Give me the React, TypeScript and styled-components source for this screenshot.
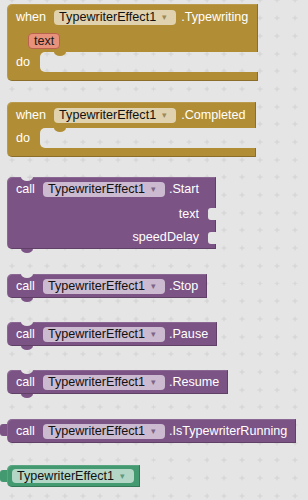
import styled, { createGlobalStyle, css } from "styled-components";

const EVENT = "#b18e35";
const METHOD = "#7c5385";
const COMPONENT = "#439970";

const plus =
  '<svg xmlns="http://www.w3.org/2000/svg" width="17.7" height="17.7"><path d="M6.35 8.85h5M8.85 6.35v5" stroke="#d2d2d2" stroke-width="1"/></svg>';

const gridBg = css`
  background-color: #e5e5e5;
  background-image: url("data:image/svg+xml,${encodeURIComponent(plus)}");
  background-size: 17.7px 17.7px;
  background-position: 3.15px -8.35px;
  background-attachment: fixed;
`;

const GlobalStyle = createGlobalStyle`
  html, body {
    margin: 0;
    padding: 0;
  }
  body {
    ${gridBg}
    font-family: "Liberation Sans", Arial, sans-serif;
  }
`;

const Workspace = styled.div`
  display: flex;
  flex-direction: column;
  align-items: flex-start;
  min-height: 500px;
  padding: 4px 0 0 7px;
  box-sizing: border-box;
`;

interface BlockProps {
  $color: string;
  $mt?: number;
  $prev?: boolean;
  $next?: boolean;
  $output?: boolean;
}

const Block = styled.div<BlockProps>`
  position: relative;
  display: flex;
  flex-direction: column;
  margin-top: ${(p) => p.$mt ?? 0}px;
  background: ${(p) => p.$color};
  border-radius: 5px 0 0 5px;
  box-shadow: inset -1px -1px 0 rgba(0, 0, 0, 0.22),
    inset 1px 1px 0 rgba(255, 255, 255, 0.12);
  color: #fff;
  font-size: 12.6px;

  ${(p) =>
    p.$prev &&
    css`
      &::before {
        content: "";
        position: absolute;
        top: 0;
        left: 14px;
        width: 12px;
        height: 4px;
        border-radius: 0 0 6px 6px / 0 0 4px 4px;
        ${gridBg}
      }
    `}

  ${(p) =>
    p.$next &&
    css`
      &::after {
        content: "";
        position: absolute;
        bottom: -4px;
        left: 14px;
        width: 12px;
        height: 4px;
        border-radius: 0 0 6px 6px / 0 0 4px 4px;
        background: ${p.$color};
      }
    `}

  ${(p) =>
    p.$output &&
    css`
      &::before {
        content: "";
        position: absolute;
        top: 5px;
        left: -7px;
        width: 7px;
        height: 12px;
        border-radius: 3px 0 0 3px;
        background: ${p.$color};
      }
    `}
`;

const Row = styled.div<{ $h: number; $pl?: number; $pr?: number; $end?: boolean }>`
  display: flex;
  align-items: center;
  justify-content: ${(p) => (p.$end ? "flex-end" : "flex-start")};
  height: ${(p) => p.$h}px;
  padding: 0 ${(p) => p.$pr ?? 0}px 0 ${(p) => p.$pl ?? 0}px;
`;

const Label = styled.span<{ $ml?: number }>`
  margin-left: ${(p) => p.$ml ?? 0}px;
  white-space: nowrap;
  line-height: 1;
`;

const Field = styled.span<{ $bg: string; $arrow: string; $ml?: number; $h?: number }>`
  display: inline-flex;
  align-items: center;
  height: ${(p) => p.$h ?? 15}px;
  margin-left: ${(p) => p.$ml ?? 0}px;
  padding: 0 9px 0 5px;
  border-radius: 4px;
  background: ${(p) => p.$bg};
  color: #111;
  white-space: nowrap;
  line-height: 1;

  &::after {
    content: "▾";
    margin-left: 6px;
    font-size: 9px;
    color: ${(p) => p.$arrow};
  }
`;

const ParamPill = styled.span`
  display: inline-flex;
  align-items: center;
  height: 16px;
  padding: 0 5px;
  box-sizing: border-box;
  border: 1px solid #b9624e;
  border-radius: 4px;
  background: #e8917b;
  color: #1a1a1a;
  line-height: 1;
`;

const DoRow = styled.div`
  display: flex;
  height: 20px;
`;

const DoLabel = styled.div`
  display: flex;
  align-items: center;
  width: 33px;
  padding-left: 9px;
  box-sizing: border-box;
  line-height: 1;
`;

const Slot = styled.div<{ $color: string }>`
  position: relative;
  flex: 1;
  border-radius: 5px 0 0 5px;
  ${gridBg}

  &::before {
    content: "";
    position: absolute;
    top: 0;
    left: 14px;
    width: 12px;
    height: 4px;
    border-radius: 0 0 6px 6px / 0 0 4px 4px;
    background: ${(p) => p.$color};
  }
`;

const BottomBar = styled.div`
  height: 9px;
`;

const Socket = styled.span`
  width: 8px;
  height: 12px;
  margin-left: 9px;
  border-radius: 3px 0 0 3px;
  ${gridBg}
`;

const eventField = { $bg: "#e0d2ae", $arrow: "#9c8a5c" };
const methodField = { $bg: "#cbbad0", $arrow: "#7d6583" };
const componentField = { $bg: "#b4d6c6", $arrow: "#5f9a7e" };

function EventBlock({ event, mt, params }: { event: string; mt?: number; params?: string[] }) {
  return (
    <Block $color={EVENT} $mt={mt}>
      <Row $h={26} $pl={9} $pr={10}>
        <Label>when</Label>
        <Field {...eventField} $ml={8}>TypewriterEffect1</Field>
        <Label $ml={5}>.{event}</Label>
      </Row>
      {params && (
        <Row $h={22} $pl={21}>
          {params.map((p) => (
            <ParamPill key={p}>{p}</ParamPill>
          ))}
        </Row>
      )}
      <DoRow>
        <DoLabel>do</DoLabel>
        <Slot $color={EVENT} />
      </DoRow>
      <BottomBar />
    </Block>
  );
}

function CallBlock({
  method,
  mt,
  output,
  inputs,
}: {
  method: string;
  mt: number;
  output?: boolean;
  inputs?: string[];
}) {
  return (
    <Block $color={METHOD} $mt={mt} $prev={!output} $next={!output} $output={output}>
      <Row $h={inputs ? 25 : 24} $pl={9} $pr={inputs ? 17 : 9}>
        <Label>call</Label>
        <Field {...methodField} $ml={8}>TypewriterEffect1</Field>
        <Label $ml={4}>.{method}</Label>
      </Row>
      {inputs?.map((name, i) => (
        <Row key={name} $h={i === inputs.length - 1 ? 23 : 24} $end>
          <Label>{name}</Label>
          <Socket />
        </Row>
      ))}
    </Block>
  );
}

export default function App() {
  return (
    <>
      <GlobalStyle />
      <Workspace>
        <EventBlock event="Typewriting" params={["text"]} />
        <EventBlock event="Completed" mt={21} />
        <CallBlock method="Start" mt={20} inputs={["text", "speedDelay"]} />
        <CallBlock method="Stop" mt={25} />
        <CallBlock method="Pause" mt={24} />
        <CallBlock method="Resume" mt={24} />
        <CallBlock method="IsTypewriterRunning" mt={25} output />
        <Block $color={COMPONENT} $mt={22} $output>
          <Row $h={22} $pl={5} $pr={6}>
            <Field {...componentField} $h={14}>TypewriterEffect1</Field>
          </Row>
        </Block>
      </Workspace>
    </>
  );
}
